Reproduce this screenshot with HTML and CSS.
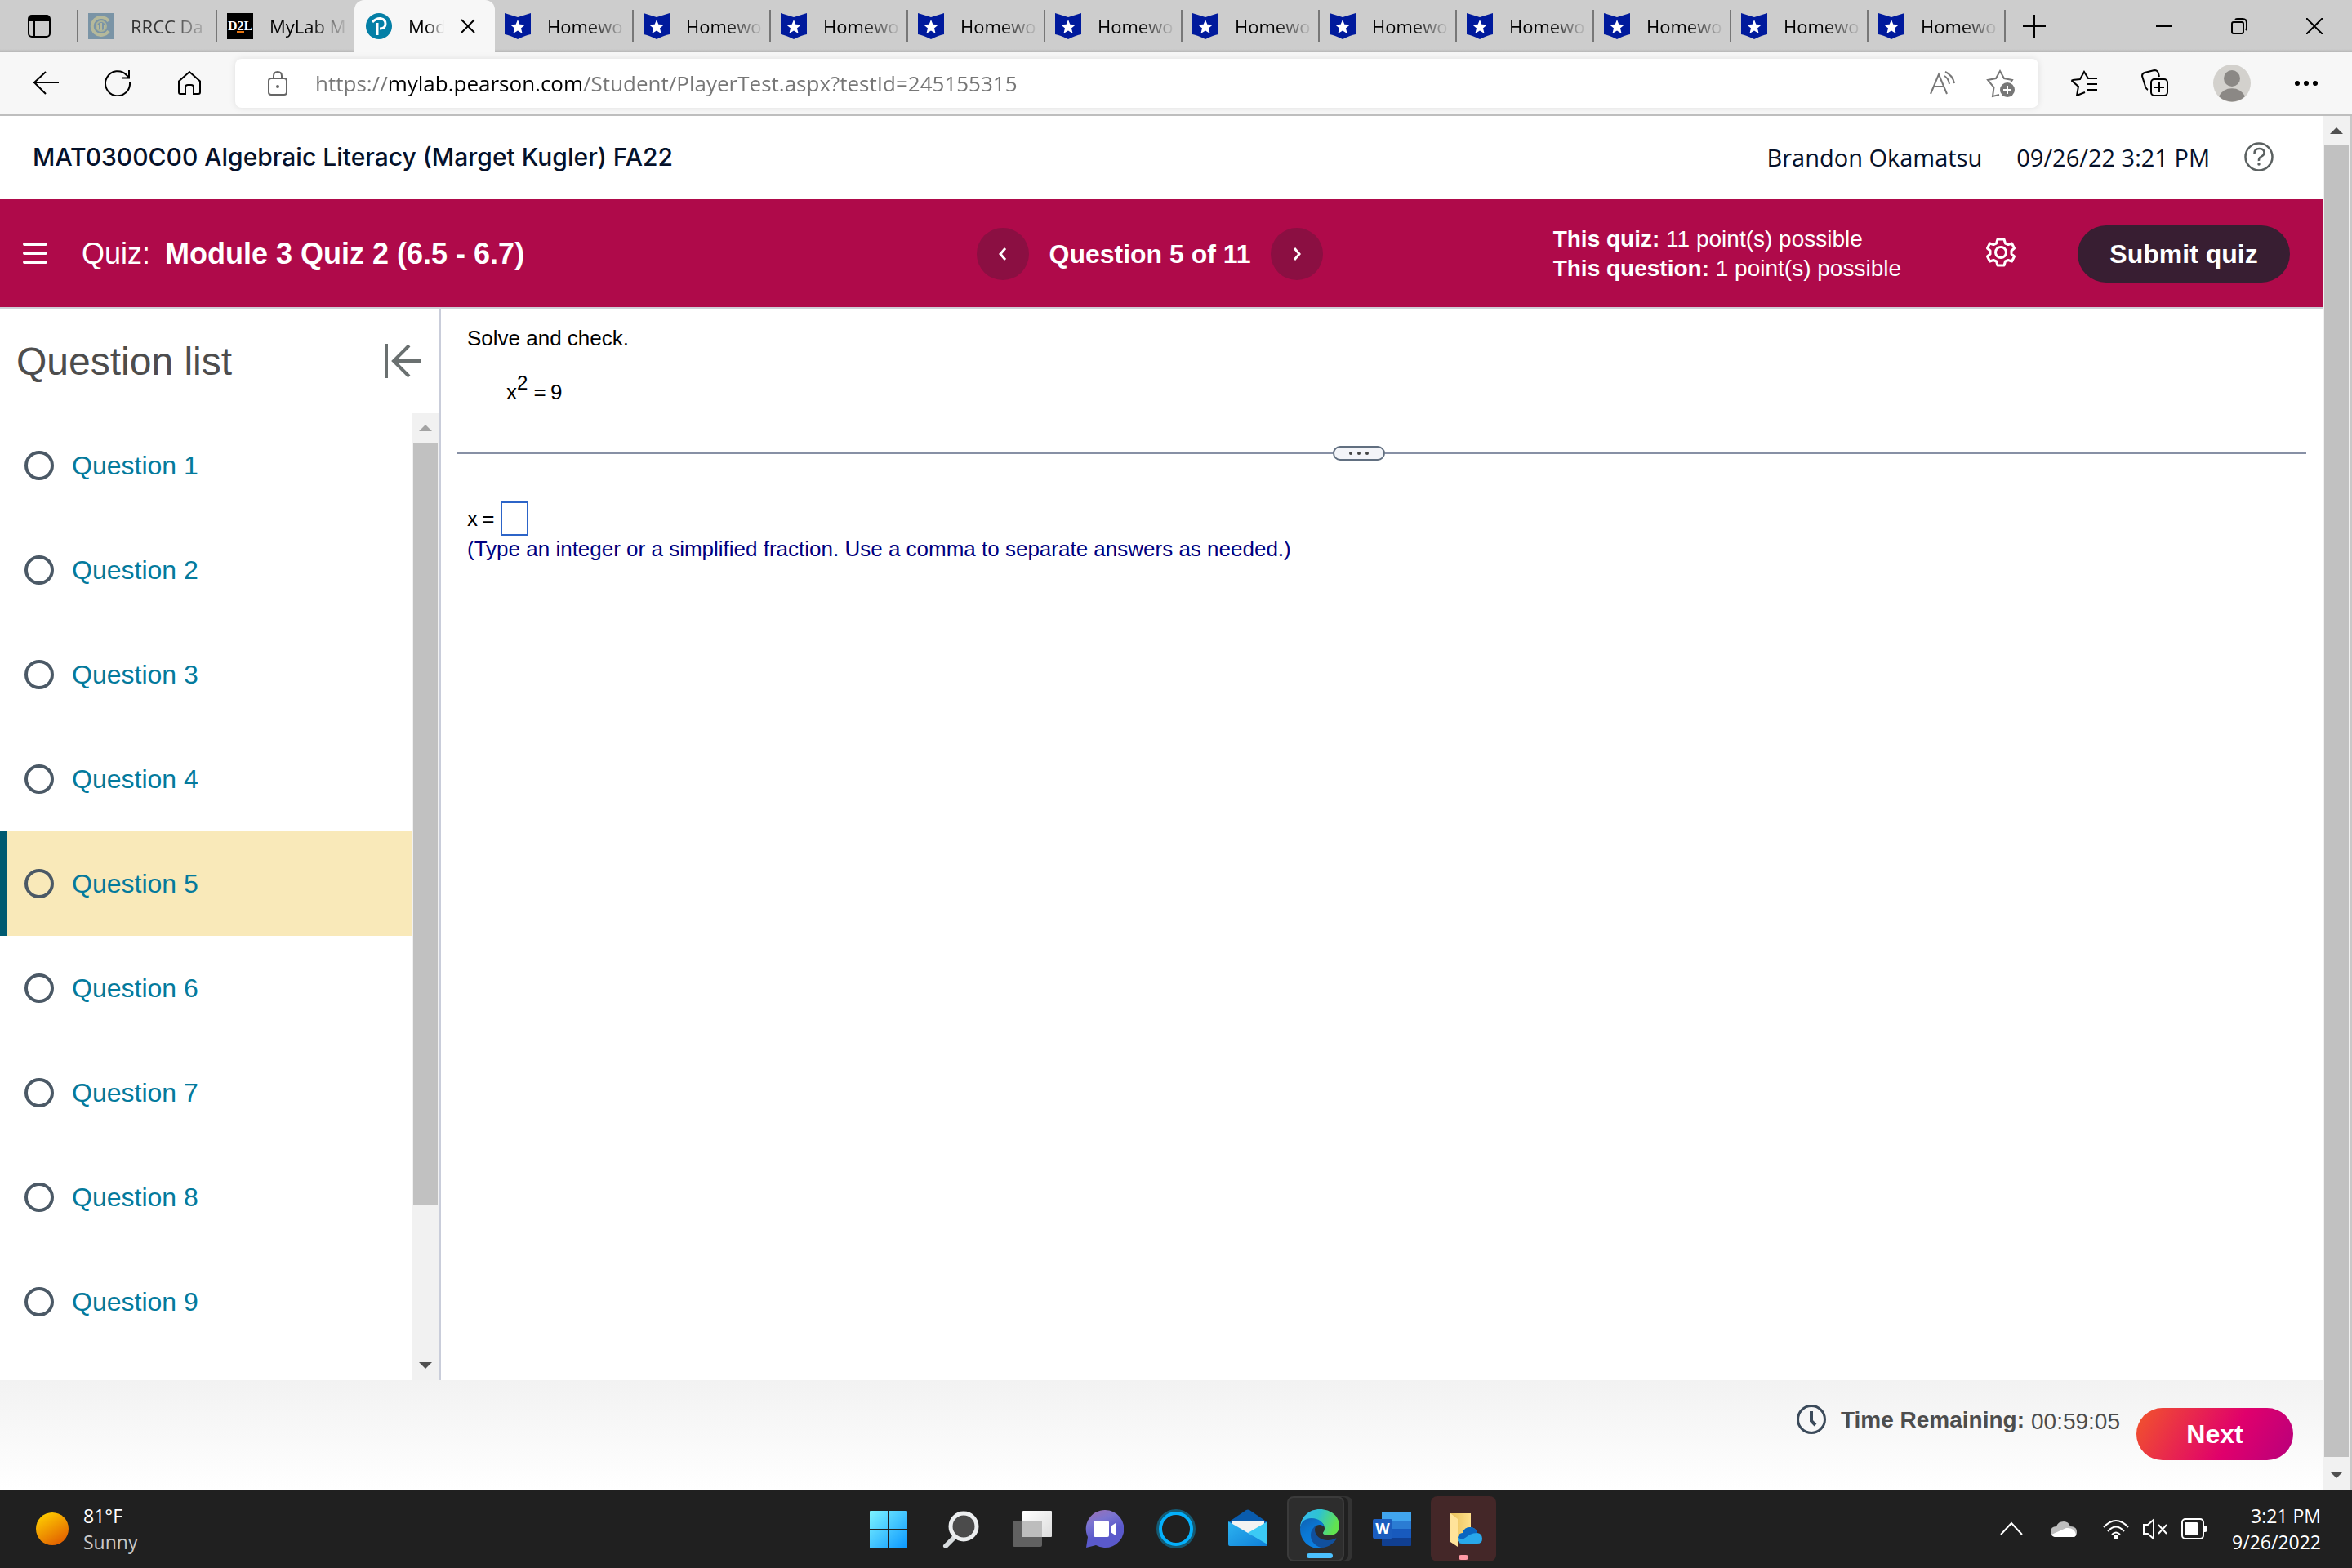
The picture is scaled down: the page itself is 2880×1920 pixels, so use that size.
FILE: index.html
```
<!DOCTYPE html>
<html lang="en">
<head>
  <meta charset="UTF-8">
  <meta name="viewport" content="width=device-width, initial-scale=1.0">
  <title>Module 3 Quiz 2 (6.5 - 6.7)</title>
  <link rel="stylesheet" href="styles.css">
</head>
<body>
  <!-- shared shapes -->
  <svg width="0" height="0" class="defs">
    <defs>
      <linearGradient id="g-win" gradientUnits="userSpaceOnUse" x1="1" y1="2" x2="47" y2="48"><stop offset="0" stop-color="#7df4ff"/><stop offset="1" stop-color="#0a97ff"/></linearGradient>
      <linearGradient id="g-white" x1="0" y1="0" x2="1" y2="1"><stop offset="0" stop-color="#fff"/><stop offset="1" stop-color="#dcdcdc"/></linearGradient>
      <linearGradient id="g-chat" x1="0" y1="0" x2="0.4" y2="1"><stop offset="0" stop-color="#a06fb0"/><stop offset="0.35" stop-color="#7b74d0"/><stop offset="0.7" stop-color="#5a59cb"/></linearGradient>
      <linearGradient id="g-mail" x1="0" y1="0" x2="1" y2="1"><stop offset="0" stop-color="#2db4f0"/><stop offset="1" stop-color="#0f7fd8"/></linearGradient>
      <linearGradient id="g-edge1" x1="0" y1="0" x2="1" y2="0.3"><stop offset="0" stop-color="#35b8f5"/><stop offset="0.5" stop-color="#2fc3d0"/><stop offset="1" stop-color="#62e34f"/></linearGradient>
      <linearGradient id="g-edge2" x1="0" y1="0" x2="0.5" y2="1"><stop offset="0" stop-color="#1060b0"/><stop offset="0.5" stop-color="#0a78d4"/><stop offset="1" stop-color="#0c7fe0"/></linearGradient>
      <linearGradient id="g-sun" x1="0.2" y1="0" x2="0.8" y2="1"><stop offset="0" stop-color="#ffd000"/><stop offset="1" stop-color="#e05a00"/></linearGradient>
      <linearGradient id="g-fold" x1="0" y1="0" x2="1" y2="0"><stop offset="0" stop-color="#e9c05a"/><stop offset="1" stop-color="#ffe08a"/></linearGradient>
    </defs>
    <symbol id="badge" viewBox="0 0 32 32">
      <path d="M0 0 16 5 32 0V26Q26 27 16 32 6 27 0 26Z" fill="#001a9c"/>
      <path d="M16 8l2.300 5.800 6.700.400-5 4.200 1.600 6.600-5.600-3.600-5.600 3.600 1.600-6.600-5-4.200 6.700-.400Z" fill="#fff"/>
    </symbol>
  </svg>

  <div class="tab-strip">
    <button class="tab-menu" aria-label="Tab actions">
      <svg width="28" height="28" viewBox="0 0 28 28"><rect x="1" y="1" width="26" height="26" rx="4" fill="none" stroke="#000" stroke-width="2"/><path d="M1 8V4q0-3 3-3h20q3 0 3 3v4Z"/><path d="M8 8v19" stroke="#000" stroke-width="2"/></svg>
    </button>
    <button class="tab faded">
      <svg width="32" height="32" viewBox="0 0 32 32"><rect width="32" height="32" fill="#7a94a6"/><path d="M25 10A11 11 0 1 0 25 22" fill="none" stroke="#b5b99b" stroke-width="4"/><circle cx="16" cy="16" r="6" fill="none" stroke="#a9b299" stroke-width="2"/><path d="M12 20v-6m4 7v-9m4 8v-6" stroke="#b5b99b" stroke-width="2"/></svg>
      <span class="tab-title">RRCC Da</span>
    </button>
    <button class="tab no-line">
      <svg width="32" height="32" viewBox="0 0 32 32"><rect width="32" height="32"/><text x="16" y="21" text-anchor="middle" class="d2l">D2L</text><path d="M12 23h9" stroke="#e87511" stroke-width="2"/></svg>
      <span class="tab-title">MyLab M</span>
    </button>
    <div class="tab active">
      <svg width="32" height="32" viewBox="0 0 32 32"><circle cx="16" cy="16" r="16" fill="#047fa6"/><path d="M14 27V12M8 11q5-5 10-4.500 6 1 6 6.500 0 6-7 6" fill="none" stroke="#fff" stroke-width="3"/></svg>
      <span class="tab-title">Mod</span>
      <button class="close-tab" aria-label="Close tab">
        <svg width="18" height="18" viewBox="0 0 18 18"><path d="M1 1l16 16M17 1 1 17" stroke="#000" stroke-width="2"/></svg>
      </button>
    </div>
    <button class="tab"><svg width="32" height="32"><use href="#badge"/></svg><span class="tab-title">Homewo</span></button>
    <button class="tab"><svg width="32" height="32"><use href="#badge"/></svg><span class="tab-title">Homewo</span></button>
    <button class="tab"><svg width="32" height="32"><use href="#badge"/></svg><span class="tab-title">Homewo</span></button>
    <button class="tab"><svg width="32" height="32"><use href="#badge"/></svg><span class="tab-title">Homewo</span></button>
    <button class="tab"><svg width="32" height="32"><use href="#badge"/></svg><span class="tab-title">Homewo</span></button>
    <button class="tab"><svg width="32" height="32"><use href="#badge"/></svg><span class="tab-title">Homewo</span></button>
    <button class="tab"><svg width="32" height="32"><use href="#badge"/></svg><span class="tab-title">Homewo</span></button>
    <button class="tab"><svg width="32" height="32"><use href="#badge"/></svg><span class="tab-title">Homewo</span></button>
    <button class="tab"><svg width="32" height="32"><use href="#badge"/></svg><span class="tab-title">Homewo</span></button>
    <button class="tab"><svg width="32" height="32"><use href="#badge"/></svg><span class="tab-title">Homewo</span></button>
    <button class="tab"><svg width="32" height="32"><use href="#badge"/></svg><span class="tab-title">Homewo</span></button>
    <button class="new-tab" aria-label="New tab">
      <svg width="28" height="28" viewBox="0 0 28 28"><path d="M14 0v28M0 14h28" stroke="#000" stroke-width="2"/></svg>
    </button>
    <div class="window-controls">
      <button aria-label="Minimize"><svg width="20" height="20" viewBox="0 0 20 20"><path d="M0 10h20" stroke="#000" stroke-width="2"/></svg></button>
      <button aria-label="Restore"><svg width="20" height="20" viewBox="0 0 20 20" fill="none" stroke="#000" stroke-width="2"><rect x="1" y="5" width="14" height="14" rx="2"/><path d="M5 2q1-1 3-1h6q5 0 5 5v6q0 2-1 3"/></svg></button>
      <button aria-label="Close"><svg width="20" height="20" viewBox="0 0 20 20"><path d="M0 0l20 20M20 0 0 20" stroke="#000" stroke-width="2"/></svg></button>
    </div>
  </div>

  <div class="toolbar">
    <button class="tool" aria-label="Back"><svg width="32" height="32" viewBox="0 0 32 32" fill="none" stroke="#000" stroke-width="2"><path d="M32 15H1M16 2 2 15l14 14"/></svg></button>
    <button class="tool" aria-label="Refresh"><svg width="32" height="32" viewBox="0 0 32 32" fill="none" stroke="#000" stroke-width="2"><path d="M31 15A15 15 0 1 1 27 6L30 9M21 9.500h9V0"/></svg></button>
    <button class="tool" aria-label="Home"><svg width="32" height="32" viewBox="0 0 32 32" fill="none" stroke="#000" stroke-width="2"><path d="M3 13.500 16 2l13 11.500V27q0 2-2 2h-6V21q0-3-3-3h-4q-3 0-3 3v8H5q-2 0-2-2Z"/></svg></button>
    <div class="address">
      <svg width="32" height="32" viewBox="0 0 32 32" fill="none" stroke="#666" stroke-width="2"><rect x="5" y="10" width="22" height="20" rx="3"/><path d="M11 10V7q0-5 5-5t5 5v3"/><circle cx="16" cy="20" r="2" fill="#666" stroke="none"/></svg>
      <input class="url" type="text" aria-label="Address" value="https://mylab.pearson.com/Student/PlayerTest.aspx?testId=245155315">
      <button class="tool" aria-label="Read aloud"><svg width="32" height="32" viewBox="0 0 32 32" fill="none" stroke="#777" stroke-width="2"><path d="M2 29 12 5l10 24M5.500 20h13M19 7q5 3 6 10M20 2q9 4 11 14"/></svg></button>
      <button class="tool" aria-label="Add to favorites"><svg width="36" height="36" viewBox="0 0 36 36" fill="none" stroke="#777" stroke-width="2"><path d="M16 32l-8 2 1.500-11L2 14l10-2 5-9 5 9 10 2-2 3"/><circle cx="26" cy="26" r="9" fill="#777" stroke="none"/><path d="M26 21v10M21 26h10" stroke="#fff"/></svg></button>
    </div>
    <div class="browser-menu">
      <button class="tool" aria-label="Favorites"><svg width="32" height="32" viewBox="0 0 32 32" fill="none" stroke="#000" stroke-width="2"><path d="M17 27l-10 4 2-11-8-7q0-1 1-1l9-1 5-9 5 8h11M20 17h12M20 24h12"/></svg></button>
      <button class="tool" aria-label="Collections"><svg width="34" height="34" viewBox="0 0 34 34" fill="none" stroke="#000" stroke-width="2"><rect x="12" y="12" width="20" height="20" rx="4"/><path d="M22 16v12M16 22h12M8 25q-2-1-3-4L1 8q0-3 3-4l12-3q4 0 5 4l1 4"/></svg></button>
      <button class="tool" aria-label="Profile"><svg width="46" height="46" viewBox="0 0 46 46"><circle cx="23" cy="23" r="23" fill="#d3d1cd"/><circle cx="23" cy="17" r="10" fill="#8b8885"/><path d="M7 39a18 18 0 0 1 32 0 23 23 0 0 1-32 0Z" fill="#8b8885"/></svg></button>
      <button class="tool" aria-label="More"><svg width="28" height="32" viewBox="0 0 28 32"><circle cx="3" cy="16" r="3"/><circle cx="14" cy="16" r="3"/><circle cx="25" cy="16" r="3"/></svg></button>
    </div>
  </div>

  <div class="page">
    <div class="content">
      <header class="course-bar">
        <h1 class="course-name">MAT0300C00 Algebraic Literacy (Marget Kugler) FA22</h1>
        <span>Brandon Okamatsu</span>
        <span>09/26/22 3:21 PM</span>
        <button class="tool" aria-label="Help">
          <svg width="36" height="36" viewBox="0 0 36 36" fill="none" stroke="#5a6060" stroke-width="2.500"><circle cx="18" cy="18" r="16.500"/><path d="M12.500 14q0-6 6-6t6 5q0 3-4 5-3 1.500-2.500 5"/><circle cx="18" cy="27" r="1" fill="#5a6060" stroke-width="1.500"/></svg>
        </button>
      </header>

      <div class="quiz-bar">
        <button class="tool" aria-label="Menu"><svg width="30" height="28" viewBox="0 0 30 28"><path d="M2 2h26M2 13h26M2 24h26" stroke="#fff" stroke-width="4" stroke-linecap="round"/></svg></button>
        <h2 class="quiz-title"><span>Quiz:</span> Module 3 Quiz 2 (6.5 - 6.7)</h2>
        <div class="pager">
          <button class="round" aria-label="Previous question"><svg width="10" height="16" viewBox="0 0 10 16"><path d="M8 1 2 8l6 7" fill="none" stroke="#fff" stroke-width="3"/></svg></button>
          <strong>Question 5 of 11</strong>
          <button class="round" aria-label="Next question"><svg width="10" height="16" viewBox="0 0 10 16"><path d="M2 1l6 7-6 7" fill="none" stroke="#fff" stroke-width="3"/></svg></button>
        </div>
        <div class="points">
          <div><b>This quiz:</b> 11 point(s) possible</div>
          <div><b>This question:</b> 1 point(s) possible</div>
        </div>
        <button class="tool" aria-label="Settings">
          <svg width="36" height="40" viewBox="0 0 36 40" fill="none" stroke="#fff" stroke-width="3" stroke-linejoin="round"><circle cx="18" cy="18" r="6.500"/><path d="M14 2h8l1.500 5 3.500 1.500 4.500-1.500 3 6-3.500 3v4l3.500 3-3 6-4.500-1.500-3.500 1.500-1.500 5h-8l-1.500-5L9 27.500 4.500 29l-3-6L5 20v-4l-3.500-3 3-6L9 8.500 12.500 7Z"/></svg>
        </button>
        <button class="submit">Submit quiz</button>
      </div>

      <div class="workspace">
        <aside class="sidebar">
          <div class="sidebar-head">
            <h2>Question list</h2>
            <button class="tool" aria-label="Collapse"><svg width="46" height="42" viewBox="0 0 46 42" fill="none" stroke="#6a7070" stroke-width="4"><path d="M3 0v42M46 21H13M31 2 12 21l19 19"/></svg></button>
          </div>
          <div class="list-wrap">
            <nav class="question-list">
              <a href="#">Question 1</a>
              <a href="#">Question 2</a>
              <a href="#">Question 3</a>
              <a href="#">Question 4</a>
              <a href="#" class="current">Question 5</a>
              <a href="#">Question 6</a>
              <a href="#">Question 7</a>
              <a href="#">Question 8</a>
              <a href="#">Question 9</a>
            </nav>
            <div class="scrollbar">
              <span class="arrow up dim"></span>
              <div class="track"><div class="thumb short"></div></div>
              <span class="arrow down"></span>
            </div>
          </div>
        </aside>

        <main class="problem">
          <p>Solve and check.</p>
          <p class="equation">x<sup>2</sup> =&thinsp;9</p>
          <div class="divider">
            <span class="line"></span>
            <button class="handle" aria-label="Resize"><i></i><i></i><i></i></button>
            <span class="line right"></span>
          </div>
          <div class="answer">
            <label for="answer">x&thinsp;=</label>
            <input id="answer" type="text">
          </div>
          <p class="hint">(Type an integer or a simplified fraction. Use a comma to separate answers as needed.)</p>
        </main>
      </div>

      <footer class="footer">
        <svg width="36" height="36" viewBox="0 0 36 36" fill="none" stroke="#3b4a5a" stroke-width="3"><circle cx="18" cy="18" r="16.500"/><path d="M18 8v12l5 5" stroke-width="4"/></svg>
        <b>Time Remaining:</b>
        <span class="time">00:59:05</span>
        <button class="next">Next</button>
      </footer>
    </div>

    <div class="scrollbar page-scroll">
      <span class="arrow up"></span>
      <div class="track"><div class="thumb"></div></div>
      <span class="arrow down"></span>
    </div>
  </div>

  <div class="taskbar">
    <div class="weather">
      <svg width="40" height="40" viewBox="0 0 40 40"><circle cx="20" cy="20" r="20" fill="url(#g-sun)"/></svg>
      <div>
        <div>81°F</div>
        <div class="muted">Sunny</div>
      </div>
    </div>
    <div class="apps">
      <button aria-label="Start"><svg width="48" height="48" viewBox="0 0 48 48"><path d="M1 3q0-1 1-1h21v22H1ZM25 2h21q1 0 1 1v21H25ZM1 26h22v22H2q-1 0-1-1ZM25 26h22v21q0 1-1 1H25Z" fill="url(#g-win)"/></svg></button>
      <button aria-label="Search"><svg width="48" height="48" viewBox="0 0 48 48"><path d="M16 35 6 45" stroke="#d8dcde" stroke-width="6" stroke-linecap="round"/><circle cx="28" cy="21" r="16" fill="#4b4b4b" stroke="#eceeef" stroke-width="5"/></svg></button>
      <button aria-label="Task view"><svg width="48" height="48" viewBox="0 0 48 48"><rect x="12" y="2" width="36" height="32" rx="1" fill="url(#g-white)"/><rect x="0" y="14" width="36" height="32" rx="2" fill="#616161"/><path d="M12 14h24v20H12Z" fill="#bdbdbd"/></svg></button>
      <button aria-label="Chat"><svg width="48" height="48" viewBox="0 0 48 48"><path d="M25 1a23 23 0 1 1-11 43L2 47l2-13A23 23 0 0 1 25 1Z" fill="url(#g-chat)"/><rect x="11" y="14" width="19" height="20" rx="2" fill="#fff"/><path d="M32 21l6-4v15l-6-4Z" fill="#fff"/></svg></button>
      <button aria-label="Cortana"><svg width="48" height="48" viewBox="0 0 48 48" fill="none"><circle cx="24" cy="24" r="22" stroke="#155a73" stroke-width="4"/><circle cx="24" cy="24" r="19" stroke="#04b0fb" stroke-width="4"/></svg></button>
      <button aria-label="Mail"><svg width="48" height="48" viewBox="0 0 48 48"><path d="M0 16 22 1q2-1 4 0l22 15v8H0Z" fill="#0a5cae"/><path d="M4 15h40v10L24 36 4 25Z" fill="#f2f2f2"/><path d="M48 15 24 29l24 16Z" fill="#3bcaf5"/><path d="M0 15 24 29 48 43v2H2q-2 0-2-2Z" fill="url(#g-mail)"/></svg></button>
      <button class="open" aria-label="Edge"><svg width="48" height="48" viewBox="0 0 48 48"><path d="M0 22C1 9 11 0 24 0 38 0 48 9 48 20c0 8-5 12-12 12-5 0-8-1-8-3 0-1 2-2 2-6 0-5-5-9-11-9-9 0-15 3-19 8Z" fill="url(#g-edge1)"/><path d="M0 24c0-8 6-13 14-13 9 0 15 5 16 12-1-3-4-4-6-4-5 0-9 4-9 10 0 10 7 18 16 18-2 1-5 1-7 1C10 48 0 38 0 24Z" fill="url(#g-edge2)"/><path d="M20 20c-5 3-7 7-7 12 0 8 7 15 15 15 7-1 13-5 16-10 1-1 0-2-1-1-3 1-6 2-9 2-9 0-16-6-16-13 0-2 1-4 2-5Z" fill="#11509c"/></svg></button>
      <button aria-label="Word"><svg width="48" height="48" viewBox="0 0 48 48"><path d="M12 4q0-1 1-1h34q1 0 1 1v10H12Z" fill="#41a5ee"/><path d="M12 14h36v10H12Z" fill="#2b7cd3"/><path d="M12 24h36v11H12Z" fill="#185abd"/><path d="M12 35h36v9q0 1-1 1H13q-1 0-1-1Z" fill="#103f91"/><rect x="1" y="12" width="24" height="24" rx="2" fill="#1b5dbe"/><text x="13" y="30" text-anchor="middle" class="word-letter">W</text></svg></button>
      <button class="alert" aria-label="File Explorer"><svg width="48" height="48" viewBox="0 0 48 48"><path d="M8 5h25v34H8Z" fill="url(#g-fold)"/><path d="M8 5l9 7v34l-9-6Z" fill="#ffe39a"/><path d="M17 37q0-7 6-8 2-7 9-7 7 0 9 7 6 1 6 7 0 6-6 6H22q-5 0-5-5Z" fill="#28a8ea"/><path d="M17 35q1-6 6-6 2-7 9-7 7 0 9 7-5 0-9 2l-9 6Z" fill="#0a66c0"/></svg></button>
    </div>
    <div class="tray">
      <svg width="32" height="32" viewBox="0 0 32 32"><path d="M3 23 16 9l13 14" fill="none" stroke="#fff" stroke-width="2"/></svg>
      <svg width="32" height="32" viewBox="0 0 32 32"><path d="M5 26q-5-1-5-6 0-7 7-7 2-6 9-6 6 0 8 6 8 0 8 7 0 6-5 6Z" fill="#bdbdbd"/><path d="M5 26q-3-1-4-3l18-8q10-1 12 8 0 3-4 3Z" fill="#fff"/></svg>
      <svg width="32" height="32" viewBox="0 0 32 32" fill="none" stroke="#fff" stroke-width="2"><path d="M1 14Q16-2 31 14M6 19q10-11 20 0M11 23q5-5 10 0"/><circle cx="16" cy="26" r="2" fill="#fff"/></svg>
      <svg width="32" height="32" viewBox="0 0 32 32" fill="none" stroke="#fff" stroke-width="2"><path d="M2 11h5l7-6v23l-7-6H2ZM20 11l10 11M30 11 20 22"/></svg>
      <svg width="32" height="32" viewBox="0 0 32 32"><rect x="1" y="4" width="26" height="24" rx="4" fill="none" stroke="#fff" stroke-width="2"/><rect x="4" y="8" width="16" height="16" rx="1" fill="#fff"/><path d="M27 12h2q3 0 3 4t-3 4h-2Z" fill="#fff"/></svg>
      <div class="clock">
        <div>3:21 PM</div>
        <div>9/26/2022</div>
      </div>
    </div>
  </div>
</body>
</html>
```
FILE: styles.css
```
*, *::before, *::after {
  box-sizing: border-box;
}

body {
  margin: 0;
  height: 100vh;
  display: flex;
  flex-direction: column;
  overflow: hidden;
  font-family: "Liberation Sans", Arial, sans-serif;
  background-color: #fff;
}

h1, h2, p {
  margin: 0;
}

button {
  border: none;
  padding: 0;
  background: none;
  font-family: inherit;
  cursor: pointer;
}

svg {
  display: block;
  flex-shrink: 0;
}

.defs {
  position: absolute;
}

/* browser tabs */
.tab-strip {
  display: flex;
  align-items: center;
  height: 64px;
  background: linear-gradient(#cdcdcd 60px, #b8b8b8);
}

.tab-menu {
  width: 96px;
  height: 40px;
  padding-left: 34px;
  border-right: 2px solid #777;
}

.tab {
  display: flex;
  align-items: center;
  gap: 20px;
  width: 168px;
  height: 40px;
  padding: 0 6px 0 12px;
  border-right: 2px solid #777;
  font-family: "Segoe UI", "Open Sans", sans-serif;
  font-size: 22px;
  color: #000;
}

.tab-title {
  flex: 1;
  min-width: 0;
  white-space: nowrap;
  text-align: left;
  -webkit-mask-image: linear-gradient(90deg, #000 50%, transparent);
  mask-image: linear-gradient(90deg, #000 50%, transparent);
}

.faded,
.active + .tab {
  width: 170px;
}

.faded {
  color: #333;
}

.no-line {
  border-right: none;
}

.active {
  position: relative;
  width: 172px;
  height: 64px;
  padding: 0 24px 0 14px;
  border: none;
  border-radius: 12px 12px 0 0;
  background-color: #f7f7f7;
}

.close-tab {
  flex-shrink: 0;
}

.new-tab {
  padding: 0 21px;
}

.window-controls {
  display: flex;
  margin-left: auto;
}

.window-controls button {
  display: flex;
  justify-content: center;
  width: 92px;
}

/* address row */
.toolbar {
  display: flex;
  align-items: center;
  height: 78px;
  padding: 0 42px 0 40px;
  gap: 56px;
  background-color: #f7f7f7;
  border-bottom: 2px solid #bebebe;
}

.browser-menu {
  display: flex;
  align-items: center;
  gap: 54px;
}

.tool {
  flex-shrink: 0;
}

.address {
  flex: 1;
  display: flex;
  align-items: center;
  gap: 38px;
  height: 60px;
  margin: 0 -16px;
  padding: 0 28px 0 36px;
  border-radius: 8px;
  background-color: #fff;
  box-shadow: 0 0 8px rgba(0, 0, 0, 0.1);
}

/* the host name is darker than the rest of the address */
.url {
  flex: 1;
  margin-left: -8px;
  padding: 0;
  border: none;
  outline: none;
  font-family: "Segoe UI", "Open Sans", sans-serif;
  font-size: 26px;
  color: transparent;
  background: linear-gradient(90deg, #767676 89px, #000 89px, #000 329px, #767676 329px);
  -webkit-background-clip: text;
  background-clip: text;
}

/* page area */
.page {
  flex: 1;
  min-height: 0;
  display: flex;
}

.content {
  flex: 1;
  display: flex;
  flex-direction: column;
}

.course-bar {
  display: flex;
  align-items: center;
  height: 102px;
  padding: 0 60px 2px 40px;
  gap: 42px;
  font-family: "Open Sans", sans-serif;
  font-size: 29px;
  color: #05112a;
}

.course-name {
  flex: 1;
  font-family: Inter, sans-serif;
  font-size: 30px;
  font-weight: 500;
}

.quiz-bar {
  display: flex;
  align-items: center;
  height: 134px;
  padding: 2px 40px 0 28px;
  background-color: #af0a4a;
  border-bottom: 2px solid #d0d0d8;
  color: #fff;
}

.quiz-title {
  flex: 1;
  margin-left: 42px;
  font-size: 36px;
}

.quiz-title span {
  margin-right: 8px;
  font-weight: normal;
}

.pager {
  display: flex;
  align-items: center;
  gap: 24px;
  font-size: 32px;
}

.round {
  display: flex;
  align-items: center;
  justify-content: center;
  width: 64px;
  height: 64px;
  border-radius: 50%;
  background-color: #8b0f42;
}

.points {
  margin: 0 104px 0 282px;
  font-size: 28px;
  line-height: 36px;
}

.submit {
  width: 260px;
  height: 70px;
  margin-left: 76px;
  border-radius: 35px;
  background-color: #381e32;
  color: #fff;
  font-size: 32px;
  font-weight: bold;
}

.workspace {
  flex: 1;
  min-height: 0;
  display: flex;
}

/* question list */
.sidebar {
  display: flex;
  flex-direction: column;
  width: 540px;
  border-right: 2px solid #c9cdda;
}

.sidebar-head {
  display: flex;
  align-items: center;
  justify-content: space-between;
  height: 128px;
  padding: 0 22px 0 20px;
  color: #4d4d4d;
}

.sidebar-head h2 {
  font-size: 48px;
  font-weight: normal;
}

.list-wrap {
  flex: 1;
  min-height: 0;
  display: flex;
}

.question-list {
  flex: 1;
  overflow: hidden;
}

.question-list a {
  display: flex;
  align-items: center;
  gap: 22px;
  height: 128px;
  padding-left: 22px;
  border-left: 8px solid transparent;
  font-size: 32px;
  color: #047a9c;
  text-decoration: none;
}

.question-list a::before {
  content: "";
  width: 36px;
  height: 36px;
  border: 4px solid #4b5966;
  border-radius: 50%;
}

.question-list .current {
  border-left-color: #005a70;
  background-color: #f9e9b9;
}

/* scrollbars */
.scrollbar {
  display: flex;
  flex-direction: column;
  width: 34px;
  padding: 0 2px;
  background-color: #f1f1f1;
}

.page-scroll {
  width: 36px;
  border-right: 2px solid #c8c8c8;
}

.arrow {
  display: flex;
  align-items: center;
  justify-content: center;
  height: 36px;
}

.arrow::before {
  content: "";
  border: 8px solid transparent;
}

.up::before {
  border-top: none;
  border-bottom-color: #505050;
}

.down::before {
  border-bottom: none;
  border-top-color: #505050;
}

.dim::before {
  border-bottom-color: #a3a3a3;
}

.track {
  flex: 1;
}

.page-scroll .track {
  padding-bottom: 4px;
}

.thumb {
  height: 100%;
  background-color: #c1c1c1;
}

.short {
  height: 84%;
}

/* problem */
.problem {
  flex: 1;
  padding: 20px 20px 0;
  font-size: 26px;
  line-height: 32px;
}

.problem p {
  padding-left: 12px;
}

.problem .equation {
  margin-top: 34px;
  padding-left: 60px;
}

.equation sup {
  font-size: 24px;
  line-height: 0;
  vertical-align: 12px;
}

.divider {
  display: flex;
  align-items: center;
  margin-top: 50px;
}

.line {
  flex: 19;
  height: 2px;
  background-color: #8790a5;
}

.right {
  flex-grow: 20;
}

.handle {
  display: flex;
  align-items: center;
  justify-content: center;
  gap: 6px;
  width: 64px;
  height: 18px;
  border: 2px solid #616f80;
  border-radius: 9px;
  background-color: #f3f4f8;
}

.handle i {
  width: 4px;
  height: 4px;
  border-radius: 50%;
  background-color: #444;
}

.answer {
  display: flex;
  align-items: center;
  gap: 8px;
  margin-top: 50px;
  padding-left: 12px;
}

.answer input {
  width: 34px;
  height: 42px;
  border: 2px solid #2c64c8;
}

.problem .hint {
  color: #00007f;
}

.footer {
  display: flex;
  align-items: flex-start;
  justify-content: flex-end;
  height: 134px;
  padding: 30px 36px 0;
  background: linear-gradient(#f2f2f2, #fff);
  font-size: 28px;
  line-height: 38px;
  color: #4d4d4d;
}

.footer b {
  margin: 0 8px 0 18px;
}

.time {
  margin-top: 2px;
}

.next {
  width: 192px;
  height: 64px;
  margin: 4px 0 0 20px;
  border-radius: 32px;
  background: linear-gradient(120deg, #f04e30 5%, #e0006c 60%, #b8007c);
  color: #fff;
  font-size: 32px;
  font-weight: bold;
}

/* taskbar */
.taskbar {
  display: grid;
  grid-template-columns: 1fr auto 1fr;
  align-items: center;
  height: 96px;
  padding: 0 38px;
  background-color: #202020;
  font-family: "Segoe UI", "Open Sans", sans-serif;
  font-size: 23px;
  line-height: 32px;
  color: #fff;
}

.weather, .tray {
  display: flex;
  align-items: center;
}

.weather {
  gap: 18px;
  padding-left: 6px;
}

.muted {
  color: #c8c8c8;
}

.apps {
  display: flex;
  gap: 8px;
}

.apps button {
  position: relative;
  display: flex;
  align-items: center;
  justify-content: center;
  width: 80px;
  height: 80px;
  border-radius: 8px;
}

.apps .open {
  width: 70px;
  margin-right: 10px;
  padding-left: 10px;
  border: 2px solid #3b3b3b;
  background-color: #2d2d2d;
  box-shadow: 6px 0 0 -1px #202020, 10px 0 0 #333;
}

.apps .alert {
  background-color: #442728;
}

.open::after, .alert::after {
  content: "";
  position: absolute;
  bottom: 2px;
  width: 32px;
  height: 6px;
  border-radius: 3px;
  background-color: #4cc2ff;
}

.apps .alert::after {
  width: 12px;
  background-color: #ff99a4;
}

.tray {
  justify-content: flex-end;
  gap: 16px;
}

.tray svg:nth-child(-n+2) {
  margin-right: 16px;
}

.clock {
  margin-left: 14px;
  text-align: right;
}

.d2l {
  font-family: "Liberation Serif", serif;
  font-size: 16px;
  font-weight: bold;
  fill: #fff;
}

.word-letter {
  font-family: "Open Sans", sans-serif;
  font-size: 18px;
  font-weight: bold;
  fill: #fff;
}
```
